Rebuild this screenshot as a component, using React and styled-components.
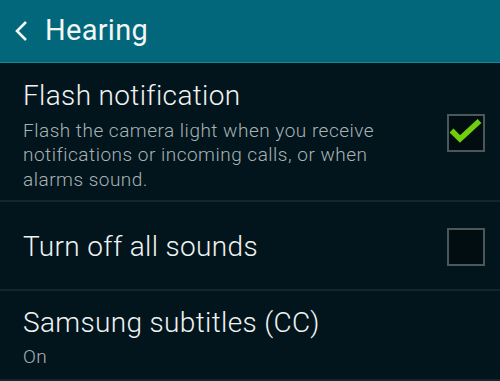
import React from "react";
import styled, { createGlobalStyle } from "styled-components";

const Global = createGlobalStyle`
  html, body { margin: 0; padding: 0; background: #03151c; }
  body { font-family: Roboto, "Noto Sans", sans-serif; }
`;

const Screen = styled.div`
  width: 500px;
  height: 381px;
  overflow: hidden;
  background: #03151c;
  display: flex;
  flex-direction: column;
`;

const Header = styled.header`
  height: 62px;
  background: #02677a;
  border-bottom: 1px solid #1a8596;
  box-shadow: 0 1px 0 #01161c;
  display: flex;
  align-items: center;
  gap: 14px;
  padding-left: 13px;
  margin-bottom: 2px;
`;

const Title = styled.h1`
  margin: 0;
  font-size: 29px;
  font-weight: 400;
  color: #f2f6f6;
  letter-spacing: 0.3px;
  padding-bottom: 2px;
`;

const Row = styled.div`
  display: flex;
  align-items: ${(p) => (p.top ? "flex-start" : "center")};
  padding: ${(p) => p.pad};
  min-height: ${(p) => p.h}px;
  box-sizing: border-box;
  border-bottom: 2px solid #14262d;
`;

const Text = styled.div`
  flex: 1;
  display: flex;
  flex-direction: column;
`;

const Label = styled.div`
  font-size: 28px;
  font-weight: 300;
  color: #f0f3f3;
  line-height: 34px;
  letter-spacing: 0.35px;
`;

const Desc = styled.div`
  font-size: 19px;
  font-weight: 300;
  color: #a8b3b6;
  line-height: 24.5px;
  letter-spacing: 0.5px;
  margin-top: ${(p) => p.mt || 6}px;
  max-width: 395px;
`;

const Box = styled.div`
  width: 38px;
  height: 38px;
  box-sizing: border-box;
  border: 2px solid #4a585c;
  background: #020d11;
  margin-right: 15px;
  margin-top: ${(p) => p.mt || 0}px;
  flex: none;
  display: flex;
`;

const Check = () => (
  <svg width="34" height="34" viewBox="0 0 34 34">
    <path d="M2.5 14.5 L11 23 L30.5 5" fill="none" stroke="#6fcf0c" strokeWidth="5.5" strokeLinecap="butt" strokeLinejoin="miter" />
  </svg>
);

const Back = () => (
  <svg width="18" height="22" viewBox="0 0 18 22">
    <path d="M13 2 L4 11 L13 20" fill="none" stroke="#f2f6f6" strokeWidth="2.6" />
  </svg>
);

export default function App() {
  return (
    <>
      <Global />
      <Screen>
        <Header>
          <Back />
          <Title>Hearing</Title>
        </Header>
        <Row top pad="14px 0 8px 23px" h={136}>
          <Text>
            <Label>Flash notification</Label>
            <Desc>
              Flash the camera light when you receive notifications or incoming calls, or when alarms sound.
            </Desc>
          </Text>
          <Box mt={35}>
            <Check />
          </Box>
        </Row>
        <Row pad="2px 0 0 23px" h={89}>
          <Text>
            <Label>Turn off all sounds</Label>
          </Text>
          <Box />
        </Row>
        <Row top pad="15px 0 0 23px" h={90}>
          <Text>
            <Label>Samsung subtitles (CC)</Label>
            <Desc mt={5}>On</Desc>
          </Text>
        </Row>
      </Screen>
    </>
  );
}
